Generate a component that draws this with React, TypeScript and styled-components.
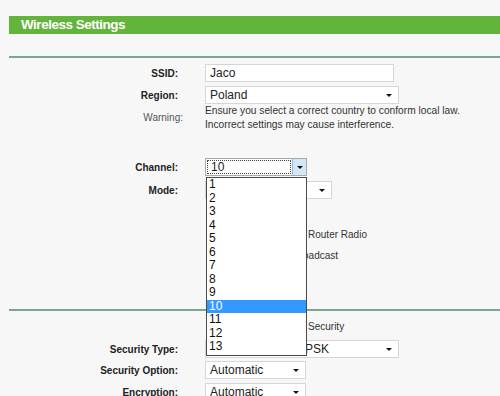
import React from 'react';
import styled, { createGlobalStyle } from 'styled-components';

const GlobalStyle = createGlobalStyle`
  body {
    margin: 0;
    background: #f7f7f7;
    font-family: 'Liberation Sans', Arial, sans-serif;
    color: #222;
  }
`;

const Page = styled.div`
  width: 500px;
  height: 396px;
  overflow: hidden;
  padding: 16px 0 0 9px;
  box-sizing: border-box;
`;

const Header = styled.div`
  height: 18px;
  line-height: 18px;
  background: #62b43a;
  color: #fff;
  font-weight: bold;
  font-size: 13.5px;
  letter-spacing: -0.5px;
  padding-left: 12px;
`;

const Divider = styled.div<{ $top: number }>`
  margin-top: ${p => p.$top}px;
  height: 2px;
  background: #7ea592;
`;

const Row = styled.div<{ $top: number; $height?: number }>`
  display: flex;
  align-items: center;
  margin-top: ${p => p.$top}px;
  min-height: ${p => p.$height ?? 18}px;
`;

const Label = styled.div<{ $plain?: boolean; $shift?: number }>`
  width: 169px;
  flex: none;
  text-align: right;
  font-size: 10px;
  font-weight: ${p => (p.$plain ? 'normal' : 'bold')};
  color: ${p => (p.$plain ? '#555' : '#222')};
  margin-right: 27px;
  position: relative;
  left: ${p => p.$shift ?? 0}px;
`;

const Field = styled.div`
  position: relative;
  display: flex;
  align-items: center;
`;

const TextBox = styled.div<{ $width: number }>`
  width: ${p => p.$width}px;
  height: 18px;
  box-sizing: border-box;
  background: #fff;
  border: 1px solid #d6d6d6;
  font-size: 12px;
  line-height: 16px;
  padding-left: 4px;
`;

const SelectBox = styled(TextBox)`
  position: relative;
  &::after {
    content: '';
    position: absolute;
    right: 6px;
    top: 7px;
    border-left: 3px solid transparent;
    border-right: 3px solid transparent;
    border-top: 3px solid #111;
  }
`;

const Warning = styled.div`
  font-size: 10.2px;
  line-height: 13.5px;
  color: #333;
`;

const ComboOpen = styled.div`
  width: 102px;
  height: 18px;
  box-sizing: border-box;
  border: 1px solid #a9a9a9;
  background: #fff;
  display: flex;
  font-size: 12px;
`;

const ComboText = styled.div`
  flex: 1;
  margin: 1px;
  border: 1px dotted #444;
  line-height: 12px;
  padding-left: 3px;
`;

const ComboButton = styled.div`
  width: 13px;
  background: #d4e7f8;
  border-left: 1px solid #8fb6dc;
  position: relative;
  &::after {
    content: '';
    position: absolute;
    left: 4px;
    top: 7px;
    border-left: 3px solid transparent;
    border-right: 3px solid transparent;
    border-top: 3px solid #111;
  }
`;

const List = styled.ul`
  position: absolute;
  left: 1px;
  top: 19px;
  width: 101px;
  margin: 0;
  padding: 0 0 1px;
  list-style: none;
  background: #fff;
  border: 1px solid #4a4a4a;
  box-sizing: border-box;
  z-index: 5;
`;

const Item = styled.li<{ $active?: boolean }>`
  font-size: 12px;
  line-height: 13.5px;
  height: 13.5px;
  padding-left: 2px;
  background: ${p => (p.$active ? '#3399ff' : 'transparent')};
  color: ${p => (p.$active ? '#fff' : '#111')};
`;

const Check = styled.span`
  display: inline-block;
  width: 11px;
  height: 11px;
  border: 1px solid #888;
  background: #fff;
  margin: 0 13px 0 2px;
`;

const Radio = styled(Check)`
  border-radius: 50%;
`;

const CheckText = styled.span`
  font-size: 10px;
  color: #333;
`;

const channels = Array.from({ length: 13 }, (_, i) => String(i + 1));

export default function App() {
  return (
    <Page>
      <GlobalStyle />
      <Header>Wireless Settings</Header>
      <Divider $top={22} />

      <Row $top={6}>
        <Label>SSID:</Label>
        <Field>
          <TextBox $width={189}>Jaco</TextBox>
        </Field>
      </Row>
      <Row $top={4}>
        <Label>Region:</Label>
        <Field>
          <SelectBox $width={194}>Poland</SelectBox>
        </Field>
      </Row>
      <Row $top={0} $height={27}>
        <Label $plain $shift={5}>Warning:</Label>
        <Warning>
          Ensure you select a correct country to conform local law.
          <br />
          Incorrect settings may cause interference.
        </Warning>
      </Row>

      <Row $top={27}>
        <Label>Channel:</Label>
        <Field>
          <ComboOpen>
            <ComboText>10</ComboText>
            <ComboButton />
          </ComboOpen>
          <List>
            {channels.map(c => (
              <Item key={c} $active={c === '10'}>
                {c}
              </Item>
            ))}
          </List>
        </Field>
      </Row>
      <Row $top={5}>
        <Label>Mode:</Label>
        <Field>
          <SelectBox $width={127}>11bgn mixed</SelectBox>
        </Field>
      </Row>

      <Row $top={26}>
        <Label />
        <Field>
          <Check />
          <CheckText>Enable Wireless Router Radio</CheckText>
        </Field>
      </Row>
      <Row $top={3}>
        <Label />
        <Field>
          <Check />
          <CheckText>Enable SSID Broadcast</CheckText>
        </Field>
      </Row>

      <Divider $top={45} />

      <Row $top={6}>
        <Label />
        <Field>
          <Radio />
          <CheckText>Enable Wireless Security</CheckText>
        </Field>
      </Row>
      <Row $top={5}>
        <Label>Security Type:</Label>
        <Field>
          <SelectBox $width={194}>WPA-PSK/WPA2-PSK</SelectBox>
        </Field>
      </Row>
      <Row $top={3}>
        <Label>Security Option:</Label>
        <Field>
          <SelectBox $width={101}>Automatic</SelectBox>
        </Field>
      </Row>
      <Row $top={4}>
        <Label>Encryption:</Label>
        <Field>
          <SelectBox $width={101}>Automatic</SelectBox>
        </Field>
      </Row>
    </Page>
  );
}
